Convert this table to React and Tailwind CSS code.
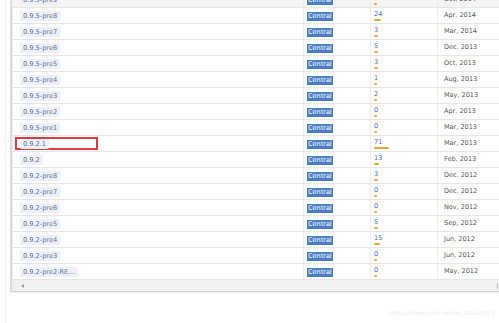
const rows = [
  ['0.9.5-pre9', 1, 'Oct, 2014'],
  ['0.9.5-pre8', 24, 'Apr, 2014'],
  ['0.9.5-pre7', 3, 'Mar, 2014'],
  ['0.9.5-pre6', 5, 'Dec, 2013'],
  ['0.9.5-pre5', 3, 'Oct, 2013'],
  ['0.9.5-pre4', 1, 'Aug, 2013'],
  ['0.9.5-pre3', 2, 'May, 2013'],
  ['0.9.5-pre2', 0, 'Apr, 2013'],
  ['0.9.5-pre1', 0, 'Mar, 2013'],
  ['0.9.2.1', 71, 'Mar, 2013'],
  ['0.9.2', 13, 'Feb, 2013'],
  ['0.9.2-pre8', 3, 'Dec, 2012'],
  ['0.9.2-pre7', 0, 'Dec, 2012'],
  ['0.9.2-pre6', 0, 'Nov, 2012'],
  ['0.9.2-pre5', 5, 'Sep, 2012'],
  ['0.9.2-pre4', 15, 'Jun, 2012'],
  ['0.9.2-pre3', 0, 'Jun, 2012'],
  ['0.9.2-pre2-RE...', 0, 'May, 2012'],
];

const boxMarked = 'ml-[2px] w-[83px] h-[13px] flex items-center pl-[3px] border-2 border-solid border-[#e23a3f]';
const boxPlain = 'ml-[2px] w-[83px] h-[13px] flex items-center pl-[5px]';

function Row({ version, usages, date, first, marked }) {
  return (
    <div className={`grid grid-cols-[290px_67px_67px_1fr] h-[16px] border-b border-[#e6e6e6] ${first ? 'bg-[#f4f4f4]' : 'bg-white'}`}>
      {/* version */}
      <div className="flex items-center">
        <div className={marked ? boxMarked : boxPlain}>
          <span className="bg-[#edf1f7] text-[#5573a6] rounded-[2px] px-[3px] h-[10px] leading-[10px] text-[6.6px] whitespace-nowrap">
            {version}
          </span>
        </div>
      </div>
      {/* repository */}
      <div className="flex items-center pl-[3px] border-l border-[#ececec]">
        <span className="bg-[#4b7fc4] text-white px-[1px] h-[9px] leading-[9px] text-[6.5px] mt-[1px]">Central</span>
      </div>
      {/* usages */}
      <div className="flex flex-col items-start pl-[3px] pt-[3px] border-l border-[#ececec]">
        <span className="text-[#3e6fb4] text-[6.5px] leading-[7px]">{usages}</span>
        <div className="mt-[1px] h-[2px] bg-[#f0a72c] rounded-[1px]" style={{ width: Math.round(3 + usages * 0.17) }} />
      </div>
      {/* date */}
      <div className="flex items-center pl-[6px] border-l border-[#ececec] text-[#555] text-[6.5px] whitespace-nowrap">
        {date}
      </div>
    </div>
  );
}

export default function App() {
  return (
    <div className="w-[499px] h-[323px] overflow-hidden bg-white font-['DejaVu_Sans',sans-serif] pl-[5px]">
      <div className="h-full border-l border-[#f1f1f1] pl-[4px] flex flex-col">
        <div className="border-l-2 border-l-[#dcdcdc] border-b border-b-[#cfcfcf] shadow-[0_1px_1px_rgba(0,0,0,0.06)]">
          <div className="border-l border-[#eeeeee] -mt-[8px]">
            {rows.map(([v, u, d], i) => (
              <Row key={v} version={v} usages={u} date={d} first={i === 0} marked={v === '0.9.2.1'} />
            ))}
            {/* horizontal scrollbar */}
            <div className="h-[11px] bg-[#f1f1f1] flex items-center justify-between pl-[8px] pr-[1px]">
              <svg width="3" height="4" viewBox="0 0 3 4"><path d="M3 0L0 2L3 4Z" fill="#9a9a9a" /></svg>
              <svg width="2" height="6" viewBox="0 0 2 6"><path d="M2 0Q0 3 2 6" stroke="#b5b5b5" fill="none" /></svg>
            </div>
          </div>
        </div>
        <div className="flex-1 flex items-end justify-end pr-[4px] pb-[6px]">
          <span className="text-[#ededed] text-[6px] leading-[8px]">https://blog.csdn.net/qq_42418571</span>
        </div>
      </div>
    </div>
  );
}
